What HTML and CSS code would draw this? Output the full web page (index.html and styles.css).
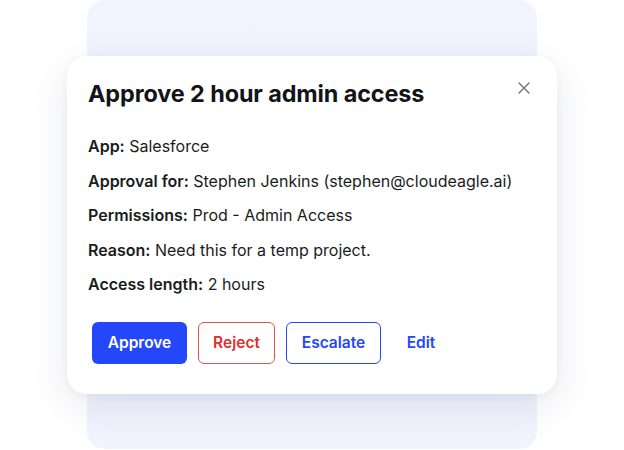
FILE: index.html
```html
<!DOCTYPE html>
<html lang="en">
<head>
<meta charset="utf-8">
<title>Approve access</title>
<link rel="stylesheet" href="styles.css">
</head>
<body>
<div class="stage">
  <div class="panel"></div>
  <div class="card">
    <div class="card-head">
      <h1 class="title">Approve 2 hour admin access</h1>
      <button class="close" aria-label="Close">
        <svg width="12" height="12" viewBox="0 0 12 12"><path d="M1 1L11 11M11 1L1 11" stroke="#7a7a7a" stroke-width="1.5" stroke-linecap="round"/></svg>
      </button>
    </div>
    <div class="rows">
      <p class="row"><span class="label">App:</span> Salesforce</p>
      <p class="row"><span class="label">Approval for:</span> Stephen Jenkins (stephen@cloudeagle.ai)</p>
      <p class="row"><span class="label">Permissions:</span> Prod - Admin Access</p>
      <p class="row"><span class="label">Reason:</span> Need this for a temp project.</p>
      <p class="row"><span class="label">Access length:</span> 2 hours</p>
    </div>
    <div class="actions">
      <button class="btn btn-approve">Approve</button>
      <button class="btn btn-reject">Reject</button>
      <button class="btn btn-escalate">Escalate</button>
      <button class="btn btn-edit">Edit</button>
    </div>
  </div>
</div>
</body>
</html>
```
FILE: styles.css
```css
html, body {
  margin: 0;
  padding: 0;
  background: #ffffff;
}
body {
  font-family: Inter, "Liberation Sans", sans-serif;
  color: #121417;
}
.stage {
  display: grid;
  width: 624px;
  height: 450px;
  overflow: hidden;
}
.panel {
  grid-area: 1 / 1;
  margin-left: 87px;
  width: 450px;
  height: 449px;
  border-radius: 18px;
  background: linear-gradient(#f2f5fe, #eef1fb 60%, #f1f4fe);
}
.card {
  grid-area: 1 / 1;
  align-self: start;
  margin-top: 56px;
  margin-left: 67px;
  width: 490px;
  height: 338px;
  box-sizing: border-box;
  padding: 22px 21px 0 21px;
  background: #ffffff;
  border-radius: 20px;
  box-shadow: 0 12px 40px rgba(30, 40, 80, 0.10), 0 2px 10px rgba(30, 40, 80, 0.04);
}
.card-head {
  display: flex;
  justify-content: space-between;
  align-items: flex-start;
}
.title {
  margin: 0;
  font-size: 23.4px;
  line-height: 32px;
  font-weight: 700;
  letter-spacing: -0.1px;
  color: #121417;
}
.close {
  border: 0;
  background: none;
  padding: 0;
  margin: 4px 6px 0 0;
  width: 12px;
  height: 12px;
  display: flex;
}
.rows {
  margin-top: 19px;
}
.row {
  margin: 0;
  font-size: 16px;
  line-height: 20px;
  padding: 7px 0 7.5px;
  color: #1a1c20;
}
.label {
  font-weight: 600;
}
.actions {
  display: flex;
  gap: 11px;
  margin-top: 20px;
  padding-left: 4px;
}
.btn {
  height: 42px;
  box-sizing: border-box;
  border-radius: 6px;
  font-family: inherit;
  font-size: 15.5px;
  font-weight: 600;
  background: #ffffff;
  border: 1px solid transparent;
  padding: 0;
}
.btn-approve {
  width: 95px;
  background: #2447fb;
  color: #ffffff;
}
.btn-reject {
  width: 77px;
  border-color: #e4524f;
  color: #e02f2f;
}
.btn-escalate {
  width: 95px;
  border-color: #2447fb;
  color: #2447fb;
}
.btn-edit {
  width: 58px;
  color: #2447fb;
}
```
